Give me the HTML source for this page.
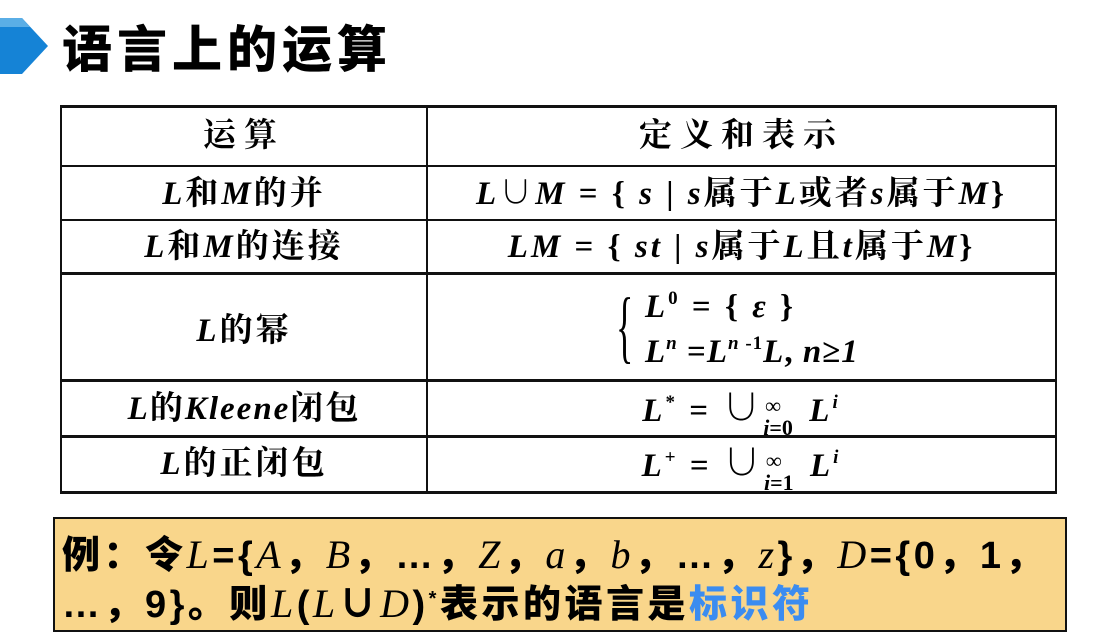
<!DOCTYPE html>
<html><head><meta charset="utf-8"><style>
body{margin:0;width:1118px;height:638px;background:#fff;position:relative;overflow:hidden;font-family:"Liberation Serif","Noto Serif CJK SC",serif;}
.t{position:absolute;font-family:"Liberation Sans","Noto Sans CJK SC",sans-serif;font-weight:900;font-size:50px;left:62px;top:18px;letter-spacing:5px;line-height:64px;color:#000}
.ln{position:absolute;background:#111}
.c{position:absolute;text-align:center;font-size:33px;font-weight:bold;line-height:38px;white-space:nowrap;letter-spacing:3px}
i{font-style:italic}
sup{font-size:19px;vertical-align:0;position:relative;top:-13px}
.box{position:absolute;left:53px;top:517px;width:1010px;height:111px;background:#f9d68b;border:2px solid #111}
.ex{position:absolute;left:62px;font-family:"Liberation Sans","Noto Sans CJK SC",sans-serif;font-weight:900;font-size:38px;line-height:44px;white-space:nowrap;letter-spacing:3.5px}
.ex i{font-family:"Liberation Serif",serif;font-weight:normal;font-size:40px}
.u{display:inline-block;width:46px;position:relative;font-size:22px;line-height:18px;vertical-align:-8px;text-align:left;letter-spacing:0}
</style></head><body>
<svg style="position:absolute;left:0;top:18px" width="50" height="56"><polygon points="0,0 22,0 48,28 22,56 0,56" fill="#1583d6"/><polygon points="0,0 22,0 30,9 0,9" fill="#5aaee6"/></svg>
<div class="t">语言上的运算</div>

<div class="ln" style="left:60px;top:105px;width:997px;height:3px"></div>
<div class="ln" style="left:60px;top:165px;width:997px;height:2px"></div>
<div class="ln" style="left:60px;top:219px;width:997px;height:2px"></div>
<div class="ln" style="left:60px;top:272px;width:997px;height:3px"></div>
<div class="ln" style="left:60px;top:379px;width:997px;height:3px"></div>
<div class="ln" style="left:60px;top:435px;width:997px;height:3px"></div>
<div class="ln" style="left:60px;top:491px;width:997px;height:3px"></div>
<div class="ln" style="left:60px;top:105px;width:2px;height:389px"></div>
<div class="ln" style="left:426px;top:105px;width:2px;height:389px"></div>
<div class="ln" style="left:1055px;top:105px;width:2px;height:389px"></div>

<div class="c" style="left:62px;width:364px;top:117px;letter-spacing:8px">运算</div>
<div class="c" style="left:428px;width:627px;top:117px;letter-spacing:8px">定义和表示</div>
<div class="c" style="left:62px;width:364px;top:175px"><i>L</i>和<i>M</i>的并</div>
<div class="c" style="left:428px;width:627px;top:175px"><i>L</i>∪<i>M</i> = { <i>s</i> | <i>s</i>属于<i>L</i>或者<i>s</i>属于<i>M</i>}</div>
<div class="c" style="left:62px;width:364px;top:228px"><i>L</i>和<i>M</i>的连接</div>
<div class="c" style="left:428px;width:627px;top:228px"><i>LM</i> = { <i>st</i> | <i>s</i>属于<i>L</i>且<i>t</i>属于<i>M</i>}</div>
<div class="c" style="left:62px;width:364px;top:312px"><i>L</i>的幂</div>
<div class="c" style="left:616px;top:282px;font-size:80px;font-weight:normal;line-height:90px;transform:scaleX(0.45);transform-origin:left">{</div>
<div class="c" style="left:645px;top:288px;text-align:left"><i>L</i><sup>0</sup> = { <i>ε</i> }</div>
<div class="c" style="left:645px;top:333px;text-align:left;letter-spacing:1px"><i>L</i><sup><i>n</i></sup> =<i>L</i><sup><i>n</i> -1</sup><i>L</i>, <i>n</i>≥<i>1</i></div>
<div class="c" style="left:62px;width:364px;top:390px;letter-spacing:2px"><i>L</i>的<i>Kleene</i>闭包</div>
<div class="c" style="left:428px;width:627px;top:390px"><i>L</i><sup>*</sup> = <span style="font-size:38px">∪</span><span class="u"><span style="position:absolute;top:-16px;left:2px">∞</span><span style="position:relative;top:6px"><i>i</i>=0</span></span><i>L</i><sup><i>i</i></sup></div>
<div class="c" style="left:62px;width:364px;top:445px"><i>L</i>的正闭包</div>
<div class="c" style="left:428px;width:627px;top:445px"><i>L</i><sup>+</sup> = <span style="font-size:38px">∪</span><span class="u"><span style="position:absolute;top:-16px;left:2px">∞</span><span style="position:relative;top:6px"><i>i</i>=1</span></span><i>L</i><sup><i>i</i></sup></div>

<div class="box"></div>
<div class="ex" style="top:533px">例：令<i>L</i>={<i>A</i>，<i>B</i>，…，<i>Z</i>，<i>a</i>，<i>b</i>，…，<i>z</i>}，<i>D</i>={0，1，</div>
<div class="ex" style="top:582px">…，9}。则<i>L</i>(<i>L</i>∪<i>D</i>)<sup style="font-size:20px;top:-12px">*</sup>表示的语言是<span style="color:#3b8cf0">标识符</span></div>
</body></html>
